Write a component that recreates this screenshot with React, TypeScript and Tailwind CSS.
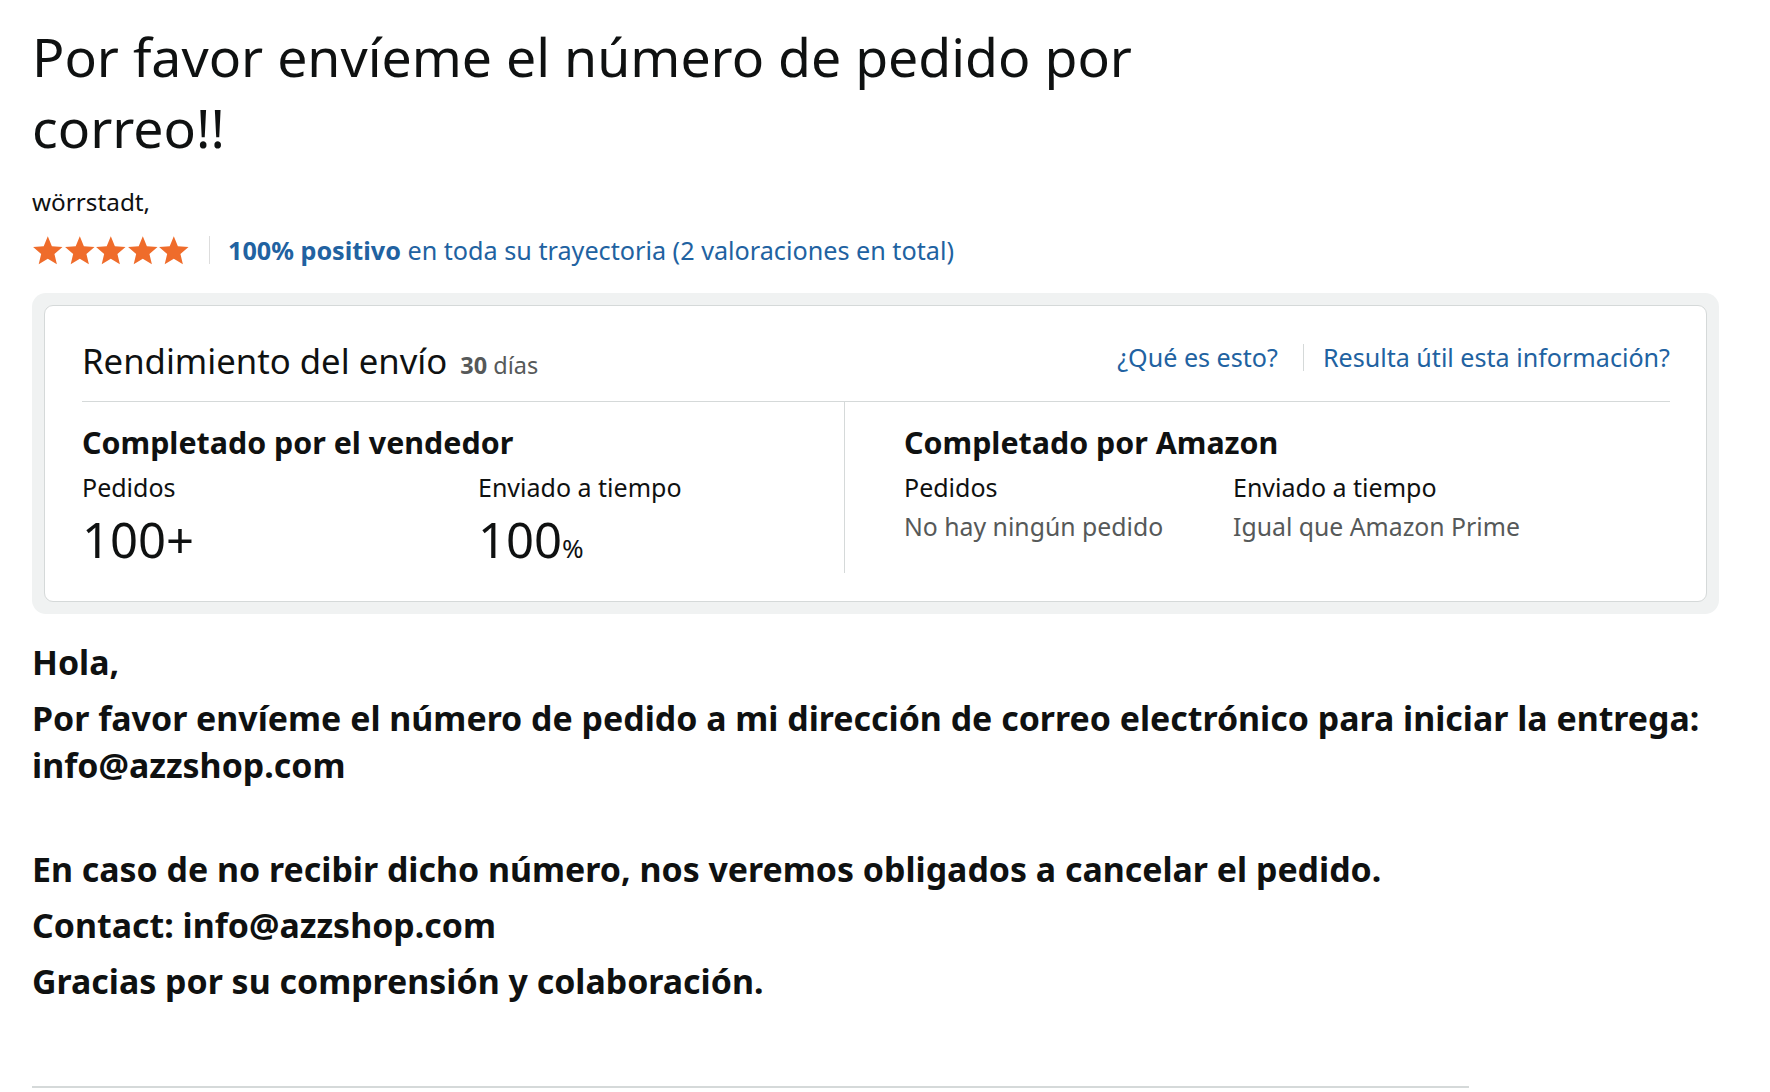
import React from "react";

function Star() {
  return (
    <svg viewBox="0 0 32 30" className="w-[31.6px] h-[29px]" aria-hidden="true">
      <polygon
        fill="#ef6c2b"
        points="16,0.3 20.23,10.48 31.22,11.36 22.85,18.52 25.4,29.24 16,23.5 6.6,29.24 9.15,18.52 0.78,11.36 11.77,10.48"
      />
    </svg>
  );
}

export default function App() {
  return (
    <div className="min-h-[1092px] bg-white font-['Noto_Sans',sans-serif] text-[#0f1111] pt-[21px] px-[32px]">
      <h1 className="max-w-[1180px] text-[53.6px] leading-[71px] font-normal">
        Por favor envíeme el número de pedido por correo!!
      </h1>

      <div className="mt-[22px] text-[24.3px] leading-[34px]">wörrstadt,</div>

      <div className="mt-[14px] flex items-center h-[34px]">
        <div className="flex items-center">
          <Star />
          <Star />
          <Star />
          <Star />
          <Star />
        </div>
        <div className="ml-[19px] w-[1px] h-[28px] bg-[#dddddd]" />
        <div className="ml-[18px] text-[25.2px] leading-[34px] text-[#2162a1]">
          <span className="font-bold">100% positivo</span> en toda su trayectoria (2 valoraciones en total)
        </div>
      </div>

      <div className="mt-[26px] w-[1687px] rounded-[14px] bg-[#f0f2f2] p-[12px]">
        <div className="rounded-[9px] border border-[#d5d9d9] bg-white pl-[37px] pr-[36px] pb-[28px]">
          <div className="flex items-center justify-between border-b border-[#d5d9d9] pt-[32px] pb-[17px]">
            <div className="flex items-baseline">
              <span className="text-[34.7px] leading-[46px]">Rendimiento del envío</span>
              <span className="ml-[13px] text-[23.5px] text-[#565959]">
                <span className="font-bold">30</span> días
              </span>
            </div>
            <div className="flex items-center pb-[8px] text-[25.1px] leading-[34px] text-[#2162a1]">
              <span>¿Qué es esto?</span>
              <span className="ml-[25px] mr-[19px] w-[1px] h-[27px] bg-[#d5d9d9]" />
              <span>Resulta útil esta información?</span>
            </div>
          </div>

          <div className="flex">
            <div className="w-[763px] border-r border-[#d5d9d9] pt-[21px]">
              <div className="text-[30.4px] leading-[40px] font-bold">Completado por el vendedor</div>
              <div className="mt-[7px] flex">
                <div className="w-[396px]">
                  <div className="text-[25px] leading-[34px]">Pedidos</div>
                  <div className="mt-[10px] text-[49px] leading-[50px]">100+</div>
                </div>
                <div>
                  <div className="text-[25px] leading-[34px]">Enviado a tiempo</div>
                  <div className="mt-[10px] text-[49px] leading-[50px]">
                    100<span className="text-[26px]">%</span>
                  </div>
                </div>
              </div>
            </div>
            <div className="pl-[59px] pt-[21px]">
              <div className="text-[30.4px] leading-[40px] font-bold">Completado por Amazon</div>
              <div className="mt-[7px] flex">
                <div className="w-[329px]">
                  <div className="text-[25px] leading-[34px]">Pedidos</div>
                  <div className="mt-[5px] text-[24.8px] leading-[34px] text-[#565959]">No hay ningún pedido</div>
                </div>
                <div>
                  <div className="text-[25px] leading-[34px]">Enviado a tiempo</div>
                  <div className="mt-[5px] text-[24.8px] leading-[34px] text-[#565959]">Igual que Amazon Prime</div>
                </div>
              </div>
            </div>
          </div>
        </div>
      </div>

      <div className="mt-[25px] text-[33.9px] leading-[47px] font-bold">
        <p>Hola,</p>
        <p className="mt-[9px]">
          Por favor envíeme el número de pedido a mi dirección de correo electrónico para iniciar la entrega: info@azzshop.com
        </p>
        <p className="mt-[57px]">En caso de no recibir dicho número, nos veremos obligados a cancelar el pedido.</p>
        <p className="mt-[9px]">Contact: info@azzshop.com</p>
        <p className="mt-[9px]">Gracias por su comprensión y colaboración.</p>
      </div>

      <div className="mt-[81px] w-[1437px] h-[2px] bg-[#d5d9d9]" />
    </div>
  );
}
